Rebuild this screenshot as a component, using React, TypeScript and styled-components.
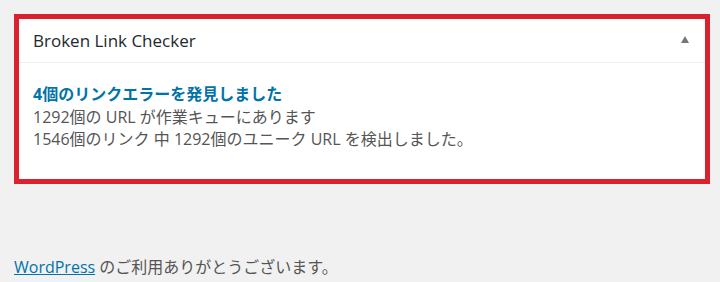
import React from "react";
import styled, { createGlobalStyle } from "styled-components";

const Global = createGlobalStyle`
  html, body { margin: 0; padding: 0; background: #f1f1f1; }
  body { font-family: "Open Sans", "Noto Sans CJK JP", sans-serif; font-size: 16px; color: #555; }
`;

const Page = styled.div`
  padding: 14px 10px 0 14px;
  display: flex;
  flex-direction: column;
`;

const Frame = styled.section`
  border: 5px solid #d9222d;
  background: #fff;
  display: flex;
  flex-direction: column;
  height: 170px;
  box-sizing: border-box;
`;

const Header = styled.header`
  height: 44px;
  box-sizing: border-box;
  border-bottom: 1px solid #eeeeee;
  display: flex;
  align-items: center;
  justify-content: space-between;
  padding: 0 16px 0 14px;
`;

const Title = styled.h2`
  margin: 0;
  font-size: 17px;
  font-weight: 400;
  color: #23282d;
`;

const Toggle = styled.span`
  width: 0;
  height: 0;
  border-left: 4.5px solid transparent;
  border-right: 4.5px solid transparent;
  border-bottom: 7px solid #72777c;
  margin-top: -2px;
`;

const Body = styled.div`
  padding: 20px 14px 0 14px;
  display: flex;
  flex-direction: column;
  line-height: 22.5px;
`;

const Alert = styled.a`
  color: #0073aa;
  font-weight: 700;
  text-decoration: none;
`;

const Line = styled.div`
  color: #555;
`;

const Footer = styled.p`
  margin: 72px 0 0 0;
  color: #555;
  line-height: 22px;
`;

const FooterLink = styled.a`
  color: #0073aa;
  text-decoration: underline;
`;

export default function App() {
  return (
    <>
      <Global />
      <Page>
        <Frame>
          <Header>
            <Title>Broken Link Checker</Title>
            <Toggle />
          </Header>
          <Body>
            <Alert href="#">4個のリンクエラーを発見しました</Alert>
            <Line>1292個の URL が作業キューにあります</Line>
            <Line>1546個のリンク 中 1292個のユニーク URL を検出しました。</Line>
          </Body>
        </Frame>
        <Footer>
          <FooterLink href="#">WordPress</FooterLink> のご利用ありがとうございます。
        </Footer>
      </Page>
    </>
  );
}
